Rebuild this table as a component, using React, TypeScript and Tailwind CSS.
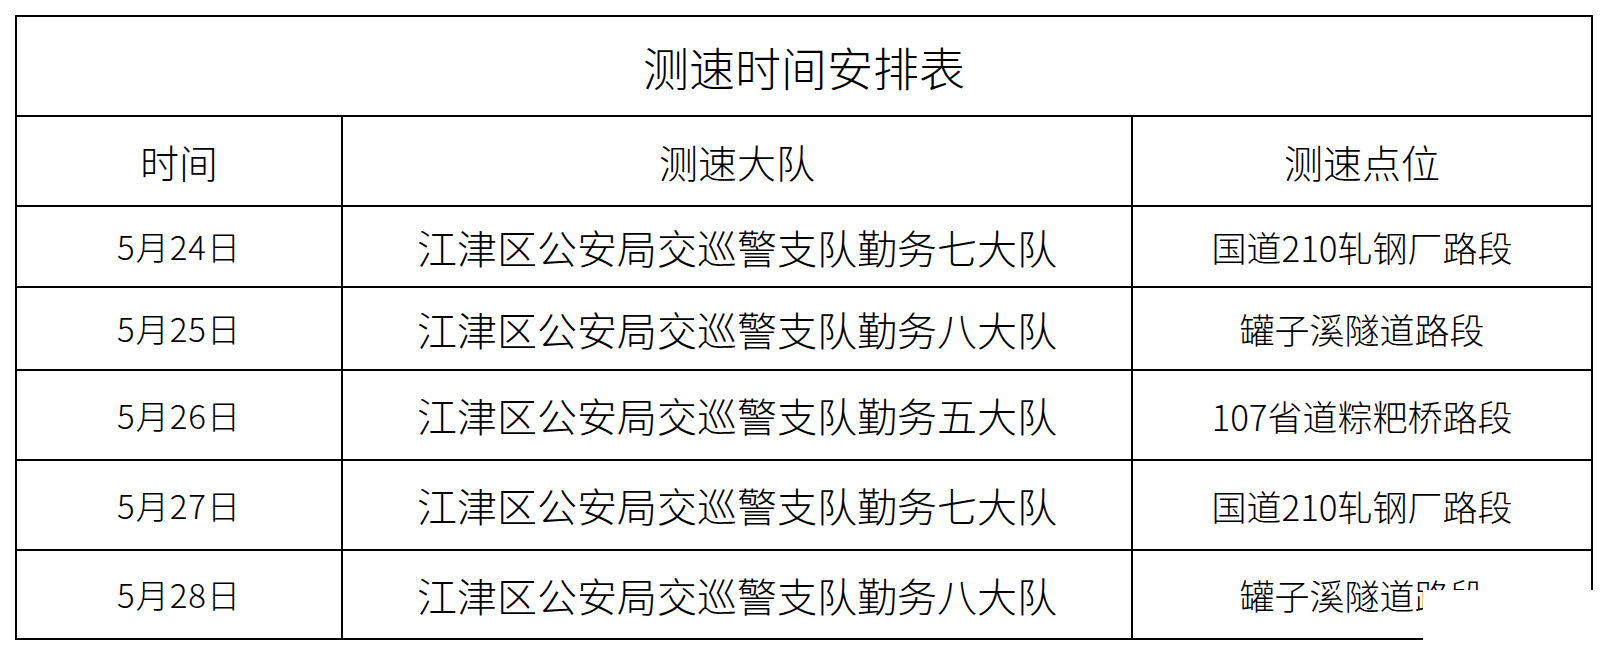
import React from 'react';

// 测速时间安排表 rows
const rows = [
  { date: '5月24日', team: '江津区公安局交巡警支队勤务七大队', spot: '国道210轧钢厂路段', h: 'h-[81px]' },
  { date: '5月25日', team: '江津区公安局交巡警支队勤务八大队', spot: '罐子溪隧道路段', h: 'h-[83px]' },
  { date: '5月26日', team: '江津区公安局交巡警支队勤务五大队', spot: '107省道粽粑桥路段', h: 'h-[90px]' },
  { date: '5月27日', team: '江津区公安局交巡警支队勤务七大队', spot: '国道210轧钢厂路段', h: 'h-[90px]' },
  { date: '5月28日', team: '江津区公安局交巡警支队勤务八大队', spot: '罐子溪隧道路段', h: 'h-[87px]' },
];

const App = () => {
  return (
    <div
      className="relative w-full h-[656px] bg-white text-black font-light overflow-hidden"
      style={{ fontFamily: '"Noto Sans CJK SC", "Liberation Sans", sans-serif' }}
    >
      <div className="pl-[15px] pt-[15px]">
        <div className="w-[1578px] border-2 border-black grid grid-cols-[326px_790px_458px]">
          {/* Title */}
          <div className="col-span-3 h-[100px] border-b-2 border-black flex items-center justify-center text-[46px] leading-none">
            测速时间安排表
          </div>

          {/* Header */}
          <div className="h-[90px] border-b-2 border-r-2 border-black flex items-center justify-center text-[39px] leading-none">
            时间
          </div>
          <div className="h-[90px] border-b-2 border-r-2 border-black flex items-center justify-center text-[39px] leading-none">
            测速大队
          </div>
          <div className="h-[90px] border-b-2 border-black flex items-center justify-center text-[39px] leading-none">
            测速点位
          </div>

          {/* Rows */}
          {rows.map((row, i) => {
            const last = i === rows.length - 1;
            return (
              <React.Fragment key={row.date}>
                <div
                  className={`${row.h} ${last ? '' : 'border-b-2'} border-r-2 border-black flex items-center justify-center text-[33px] tracking-[1px] leading-none`}
                >
                  {row.date}
                </div>
                <div
                  className={`${row.h} ${last ? '' : 'border-b-2'} border-r-2 border-black flex items-center justify-center text-[40px] leading-none`}
                >
                  {row.team}
                </div>
                <div
                  className={`${row.h} ${last ? '' : 'border-b-2'} border-black flex items-center justify-center text-[35px] leading-none`}
                >
                  {row.spot}
                </div>
              </React.Fragment>
            );
          })}
        </div>
      </div>

      {/* cropped corner of the screenshot */}
      <div className="absolute left-[1423px] top-[590px] w-[185px] h-[66px] bg-white" />
    </div>
  );
};

export default App;
